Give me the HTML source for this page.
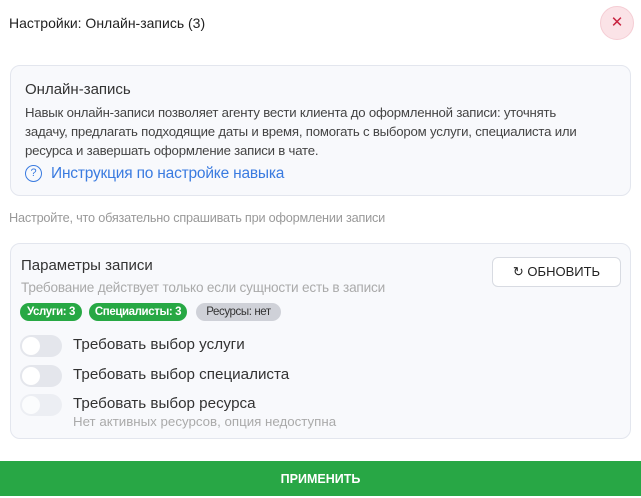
<!DOCTYPE html>
<html><head><meta charset="utf-8"><style>
*{box-sizing:border-box;margin:0;padding:0}
body{width:641px;height:496px;background:#fff;font-family:"Liberation Sans",sans-serif;position:relative;overflow:hidden;color:#222}
.abs{position:absolute;white-space:nowrap}
.card{position:absolute;left:10px;width:621px;background:#f8f9fc;border:1px solid #e3e6ee;border-radius:10px}
.tog{position:absolute;left:20px;width:42px;height:22px;border-radius:11px;background:#e4e6ec}
.tog::after{content:"";position:absolute;left:2px;top:2px;width:18px;height:18px;border-radius:50%;background:#fff}
.pill{position:absolute;top:303px;height:18px;border-radius:9px;font-size:11.5px;font-weight:bold;line-height:18px;text-align:center;letter-spacing:-0.4px}
</style></head><body>
<div class="abs" style="left:9px;top:15px;font-size:14px;letter-spacing:0px">Настройки: Онлайн-запись (3)</div>
<div class="abs" style="left:600px;top:6px;width:34px;height:34px;border-radius:50%;background:#fbe3e7;border:1px solid #f5cdd4;color:#c82340;font-size:15px;text-align:center;line-height:31px">✕</div>
<div class="card" style="top:65px;height:131px"></div>
<div class="abs" style="left:25px;top:81px;font-size:15px;color:#333">Онлайн-запись</div>
<div class="abs" style="left:25px;top:103px;font-size:13.2px;line-height:19px;color:#444;letter-spacing:-0.2px">Навык онлайн-записи позволяет агенту вести клиента до оформленной записи: уточнять<br>задачу, предлагать подходящие даты и время, помогать с выбором услуги, специалиста или<br>ресурса и завершать оформление записи в чате.</div>
<div class="abs" style="left:25px;top:165px;width:17px;height:17px;border:1.5px solid #3a7be0;border-radius:50%;color:#3a7be0;font-size:11px;text-align:center;line-height:14px">?</div>
<div class="abs" style="left:51px;top:165px;font-size:15.5px;color:#3a7be0;letter-spacing:-0.2px">Инструкция по настройке навыка</div>
<div class="abs" style="left:9px;top:211px;font-size:12.7px;color:#999;letter-spacing:-0.2px">Настройте, что обязательно спрашивать при оформлении записи</div>
<div class="card" style="top:243px;height:196px"></div>
<div class="abs" style="left:21px;top:257px;font-size:15px;color:#333">Параметры записи</div>
<div class="abs" style="left:21px;top:280px;font-size:13.6px;color:#aaa;letter-spacing:-0.2px">Требование действует только если сущности есть в записи</div>
<div class="abs" style="left:492px;top:257px;width:129px;height:30px;background:#fff;border:1px solid #d8dbe2;border-radius:6px;font-size:13px;text-align:center;line-height:28px;color:#222">↻ ОБНОВИТЬ</div>
<div class="pill" style="left:20px;width:62px;background:#27a844;color:#fff">Услуги: 3</div>
<div class="pill" style="left:89px;width:98px;background:#27a844;color:#fff">Специалисты: 3</div>
<div class="pill" style="left:196px;width:85px;background:#cfd1d8;color:#333;font-weight:normal">Ресурсы: нет</div>
<div class="tog" style="top:335px"></div>
<div class="abs" style="left:73px;top:336px;font-size:15.2px;color:#333">Требовать выбор услуги</div>
<div class="tog" style="top:365px"></div>
<div class="abs" style="left:73px;top:366px;font-size:15.2px;color:#333">Требовать выбор специалиста</div>
<div class="tog" style="top:394px;opacity:.55"></div>
<div class="abs" style="left:73px;top:395px;font-size:15.2px;color:#333">Требовать выбор ресурса</div>
<div class="abs" style="left:73px;top:414px;font-size:13.3px;color:#aaa">Нет активных ресурсов, опция недоступна</div>
<div class="abs" style="left:0;top:461px;width:641px;height:35px;background:#28a745;color:#fff;font-size:12.5px;font-weight:bold;text-align:center;line-height:37px">ПРИМЕНИТЬ</div>
</body></html>
